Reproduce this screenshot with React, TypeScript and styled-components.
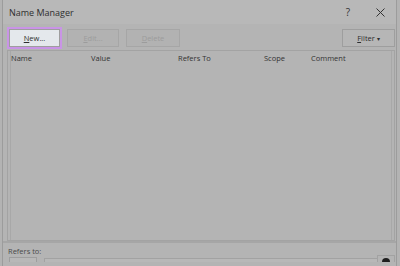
import React from "react";
import styled, { createGlobalStyle } from "styled-components";

const Global = createGlobalStyle`
  html, body {
    margin: 0;
    padding: 0;
    background: #b3b3b3;
    overflow: hidden;
  }
  body {
    font-family: "Open Sans", "Noto Sans", "Liberation Sans", sans-serif;
  }
`;

const Screen = styled.div`
  width: 400px;
  height: 266px;
  overflow: hidden;
  background: #b3b3b3;
  padding: 0 3px 0 2px;
  box-sizing: border-box;
`;

const Dialog = styled.div`
  height: 100%;
  display: flex;
  flex-direction: column;
  border-left: 1px solid #9c9c9c;
  border-right: 1px solid #9c9c9c;
  background: #b4b4b4;
`;

const TitleBar = styled.div`
  height: 24px;
  display: flex;
  align-items: center;
  padding: 0 0 0 6px;
  background: #b8b8b8;
  color: #2e2e2e;
  font-size: 9px;
`;

const Title = styled.span`
  flex: 1;
`;

const TitleButton = styled.span`
  width: 32px;
  display: flex;
  justify-content: center;
  align-items: center;
  font-size: 10px;
  color: #333;
`;

const Toolbar = styled.div`
  display: flex;
  align-items: center;
  gap: 7px;
  padding: 4px 1px 0 4px;
  height: 19px;
`;

const Button = styled.button<{ $w: number; $focused?: boolean; $disabled?: boolean }>`
  width: ${(p) => p.$w}px;
  height: 18px;
  padding: 0;
  box-sizing: border-box;
  font-family: inherit;
  font-size: 7.5px;
  color: ${(p) => (p.$disabled ? "#9c9c9c" : "#2e2e2e")};
  background: ${(p) => (p.$focused ? "#e4e8ec" : p.$disabled ? "#b2b2b2" : "#b6b6b6")};
  border: 1px solid ${(p) => (p.$disabled ? "#a6a6a6" : "#9e9e9e")};
  box-shadow: ${(p) => (p.$focused ? "0 0 0 2px #c994e6" : "none")};
  margin-left: ${(p) => (p.$focused ? "2px" : "0")};

  u {
    text-decoration: underline;
  }
`;

const Spacer = styled.div`
  flex: 1;
`;

const List = styled.div`
  margin: 3px 1px 0 4px;
  flex: 1;
  border: 1px solid #a3a3a3;
  box-shadow: inset 2px 0 0 #b4b4b4, inset 3px 0 0 #a8a8a8, inset -2px 0 0 #b4b4b4, inset -3px 0 0 #a8a8a8;
  display: flex;
  flex-direction: column;
`;

const HeaderRow = styled.div`
  display: grid;
  grid-template-columns: 80px 87px 86px 47px 1fr;
  padding: 0 0 0 3px;
  height: 14px;
  font-size: 7.5px;
  color: #333;
  align-items: center;
`;

const Footer = styled.div`
  height: 20px;
  border-top: 2px solid #a6a6a6;
  padding: 3px 0 0 5px;
  font-size: 7.5px;
  color: #4a4a4a;
`;

const RefRow = styled.div`
  height: 6px;
  display: flex;
  align-items: flex-end;
`;

const SmallButton = styled.div`
  width: 26px;
  height: 4px;
  margin-left: 1px;
  border: 1px solid #9e9e9e;
  border-bottom: none;
  background: #b8b8b8;
`;

const Input = styled.div`
  flex: 1;
  height: 3px;
  margin-left: 7px;
  border-top: 1px solid #a2a2a2;
  border-left: 1px solid #a2a2a2;
  background: #b8b8b8;
`;

const IconButton = styled.div`
  width: 16px;
  height: 6px;
  margin: 0 1px 0 0;
  border: 1px solid #a2a2a2;
  border-bottom: none;
  display: flex;
  justify-content: center;
  align-items: flex-end;
`;

export default function App() {
  return (
    <Screen>
      <Global />
      <Dialog>
        <TitleBar>
          <Title>Name Manager</Title>
          <TitleButton>?</TitleButton>
          <TitleButton>
            <svg width="9" height="9" viewBox="0 0 9 9">
              <path d="M0.5 0.5 L8.5 8.5 M8.5 0.5 L0.5 8.5" stroke="#333" strokeWidth="1" />
            </svg>
          </TitleButton>
        </TitleBar>
        <Toolbar>
          <Button $w={51} $focused>
            <u>N</u>ew...
          </Button>
          <Button $w={52} $disabled>
            <u>E</u>dit...
          </Button>
          <Button $w={54} $disabled>
            <u>D</u>elete
          </Button>
          <Spacer />
          <Button $w={53}>
            <u>F</u>ilter <small>▾</small>
          </Button>
        </Toolbar>
        <List>
          <HeaderRow>
            <span>Name</span>
            <span>Value</span>
            <span>Refers To</span>
            <span>Scope</span>
            <span>Comment</span>
          </HeaderRow>
        </List>
        <Footer>
          <div>Refers to:</div>
          <RefRow>
            <SmallButton />
            <Input />
            <IconButton>
              <svg width="8" height="5" viewBox="0 0 8 5">
                <circle cx="4" cy="5" r="4" fill="#1e1e1e" />
              </svg>
            </IconButton>
          </RefRow>
        </Footer>
      </Dialog>
    </Screen>
  );
}
